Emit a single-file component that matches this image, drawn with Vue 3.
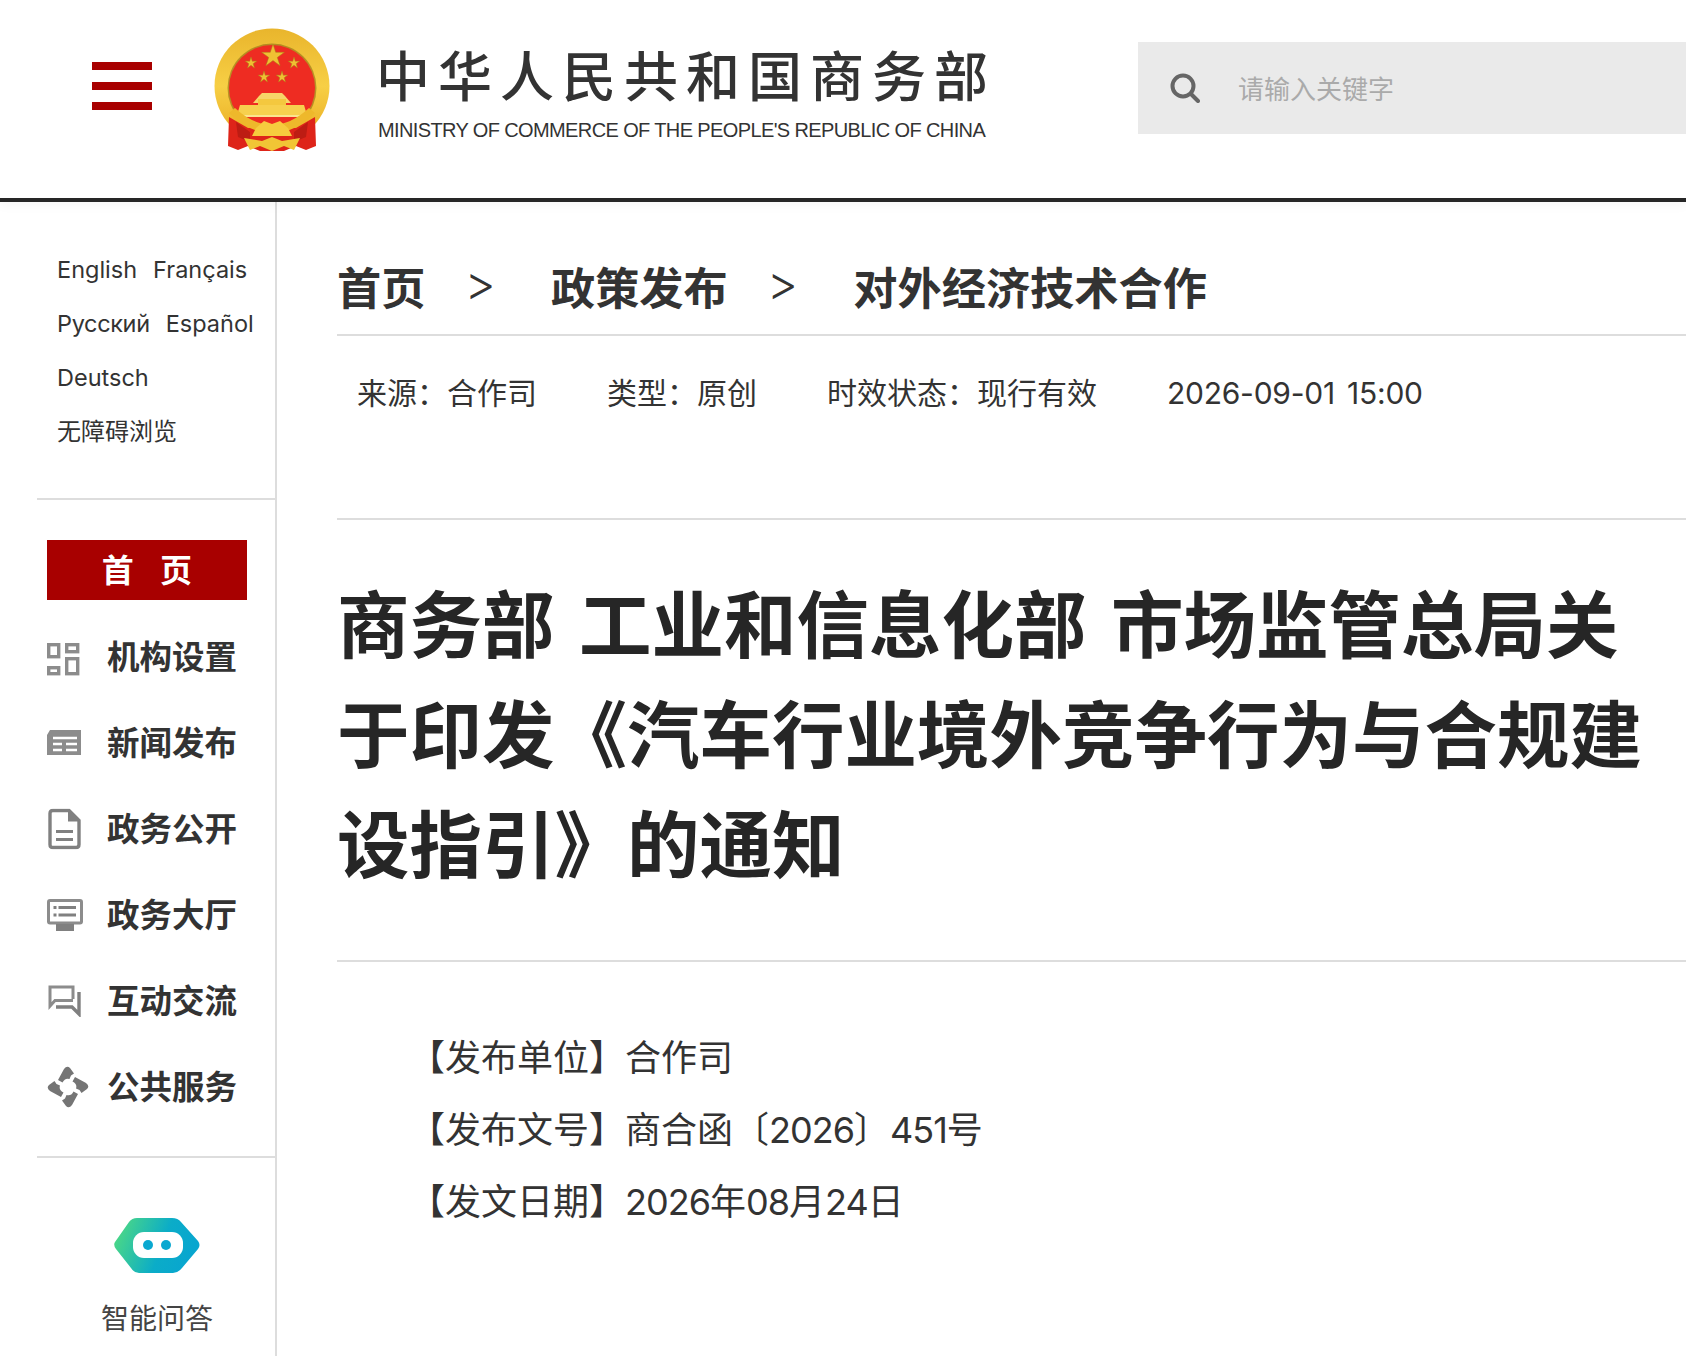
<template>
  <div class="page">
    <header class="top">
      <button class="burger" aria-label="menu"><i></i><i></i><i></i></button>
      <svg class="emblem" viewBox="214 28 116 124">
        <defs>
          <linearGradient id="gold" x1="0" y1="0" x2="0" y2="1">
            <stop offset="0" stop-color="#e9b52c" />
            <stop offset="0.5" stop-color="#f7cf45" />
            <stop offset="1" stop-color="#e8a91f" />
          </linearGradient>
        </defs>
        <circle cx="272" cy="86" r="57.5" fill="url(#gold)" />
        <circle cx="272" cy="88" r="44.5" fill="#8f6a14" opacity=".6" />
        <circle cx="272" cy="88" r="43" fill="#ee2c22" />
        <polygon v-for="s in stars" :key="s.x" :points="starPoints(s)" fill="#f0c033" stroke="#a87f18" stroke-width=".5" />
        <path d="M253 103 L259 96 L262 93 H282 L285 96 L291 103 Z" fill="#f7d568" />
        <rect x="258" y="99" width="28" height="6" fill="#f4c83f" />
        <path d="M240 105 H304 L307 115 H237 Z" fill="#f7d04e" />
        <rect x="236" y="115" width="72" height="2" fill="#fbe48e" />
        <path d="M229 117 L248 128 L296 128 L315 117 L316 146 L306 150 L296 146 L284 151 L260 151 L248 146 L238 150 L228 146 Z" fill="#de2419" />
        <path d="M236 122 L250 132 L250 142 L238 137 Z M308 122 L294 132 L294 142 L306 137 Z" fill="#bd1c13" />
        <path d="M229 113 Q272 154 315 113 L309 108 Q272 142 235 108 Z" fill="#eeb82b" />
        <path d="M256 128 L264 121 L272 124 L280 121 L288 128 L292 136 L252 136 Z" fill="#f6cc3e" />
        <path d="M244 138 L262 141 L272 137 L282 141 L300 138 L294 150 L284 146 L272 151 L260 146 L250 150 Z" fill="#f1c535" />
      </svg>
      <div class="logo-text">
        <div class="logo-cn">中华人民共和国商务部</div>
        <div class="logo-en">MINISTRY OF COMMERCE OF THE PEOPLE'S REPUBLIC OF CHINA</div>
      </div>
      <div class="search">
        <svg class="search-icon" viewBox="0 0 30 30">
          <circle cx="13" cy="13" r="10.5" fill="none" stroke="#666" stroke-width="4" />
          <path d="M21 21 L28 28" stroke="#666" stroke-width="4" stroke-linecap="round" />
        </svg>
        <input class="search-input" placeholder="请输入关键字" />
      </div>
    </header>

    <div class="body">
      <aside class="side">
        <div class="langs">
          <div class="lang-row"><span>English</span><span>Français</span></div>
          <div class="lang-row"><span class="ru">Русский</span><span>Español</span></div>
          <div class="lang-row"><span>Deutsch</span></div>
          <div class="lang-row access"><span>无障碍浏览</span></div>
        </div>
        <div class="side-rule"></div>
        <div class="home-btn">首 页</div>
        <nav class="nav">
          <div class="nav-row">
            <svg class="nav-icon grid" width="33" height="34" viewBox="0 0 33 34">
              <g fill="none" stroke="#8c8c8c" stroke-width="3.4">
                <rect x="1.7" y="2.7" width="10" height="12" />
                <rect x="19.7" y="2.7" width="11" height="7" />
                <rect x="1.7" y="25.7" width="10" height="6" />
                <rect x="19.7" y="16.7" width="11" height="15" />
              </g>
            </svg>
            <span>机构设置</span>
          </div>
          <div class="nav-row">
            <svg class="nav-icon" width="34" height="26" viewBox="0 0 34 26">
              <path d="M3 0 H34 V25 H0 V5 Z" fill="#8c8c8c" />
              <path d="M6 8 H30 M6 14 H15 M19 14 H30 M6 20 H15 M19 20 H30" stroke="#fff" stroke-width="2.4" />
            </svg>
            <span>新闻发布</span>
          </div>
          <div class="nav-row">
            <svg class="nav-icon doc" width="33" height="41" viewBox="0 0 33 41">
              <path d="M5 2 H21 L31 12 V36 Q31 39 28 39 H5 Q2 39 2 36 V5 Q2 2 5 2 Z" fill="none" stroke="#808080" stroke-width="3.4" />
              <path d="M20 2 L31 13 H20 Z" fill="#808080" />
              <path d="M8 23 H25 M8 31 H25" stroke="#808080" stroke-width="3" />
            </svg>
            <span>政务公开</span>
          </div>
          <div class="nav-row">
            <svg class="nav-icon" width="36" height="32" viewBox="0 0 36 32">
              <rect x="1.5" y="1.5" width="33" height="22.5" rx="1.5" fill="none" stroke="#8c8c8c" stroke-width="3" />
              <path d="M6.5 8.5 H9.5 M11.5 8.5 H29 M6.5 16 H9.5 M11.5 16 H29" stroke="#808080" stroke-width="3" />
              <rect x="9" y="25" width="18" height="7" fill="#808080" />
            </svg>
            <span>政务大厅</span>
          </div>
          <div class="nav-row">
            <svg class="nav-icon" width="36" height="32" viewBox="0 0 36 32">
              <path d="M26 14 V2 H3 V21 L8 15.5 H26" fill="none" stroke="#8c8c8c" stroke-width="3" />
              <path d="M32 7 V29 L25 22 H9" fill="none" stroke="#808080" stroke-width="3.4" />
            </svg>
            <span>互动交流</span>
          </div>
          <div class="nav-row">
            <svg class="nav-icon" width="42" height="44" viewBox="0 0 42 44">
              <path v-for="a in [0, 90, 180, 270]" :key="a" :transform="`rotate(${a} 21 22)`" d="M11 15 L17 4 Q20 0 23 3 L27 8.500 L24 10.500 L22.500 14 Q18 12.500 15.500 17.500 Z" fill="#757575" />
            </svg>
            <span>公共服务</span>
          </div>
        </nav>
        <div class="side-rule rule-low"></div>
        <div class="robot">
          <svg width="86" height="55" viewBox="0 0 86 55">
            <defs>
              <linearGradient id="robotFill" x1="0" y1="0" x2="1" y2="0.25">
                <stop offset="0" stop-color="#55de7c" />
                <stop offset="0.65" stop-color="#0bacc8" />
                <stop offset="1" stop-color="#08a6cf" />
              </linearGradient>
            </defs>
            <path d="M1 24 L15 4 Q18 0 23 0 H58 Q64 0 67 4 L84 23 Q87 27 84 31 L68 50 Q64 55 59 55 H25 Q20 55 17 50 L2 31 Q-1 27 1 24 Z" fill="url(#robotFill)" />
            <rect x="19" y="14" width="50" height="26" rx="11" fill="#fff" />
            <circle cx="34" cy="27" r="5" fill="#0aa8d0" />
            <circle cx="52" cy="27" r="5" fill="#0aa8d0" />
          </svg>
          <div class="robot-label">智能问答</div>
        </div>
      </aside>

      <main class="main">
        <div class="crumbs">
          <span>首页</span>
          <em>&gt;</em>
          <span>政策发布</span>
          <em>&gt;</em>
          <span>对外经济技术合作</span>
        </div>
        <div class="meta">
          <span>来源：合作司</span>
          <span>类型：原创</span>
          <span>时效状态：现行有效</span>
          <span class="date">2026-09-01 15:00</span>
        </div>
        <h1 class="title">商务部 工业和信息化部 市场监管总局关于印发《汽车行业境外竞争行为与合规建设指引》的通知</h1>
        <div class="info">
          <p>【发布单位】合作司</p>
          <p>【发布文号】商合函〔<span class="num">2026</span>〕<span class="num">451</span>号</p>
          <p>【发文日期】<span class="num">2026</span>年<span class="num">08</span>月<span class="num">24</span>日</p>
        </div>
      </main>
    </div>
  </div>
</template>

<script setup>
const stars = [
  { x: 273, y: 56, r: 12 },
  { x: 251, y: 63, r: 6 },
  { x: 294, y: 63, r: 6 },
  { x: 264, y: 77, r: 6 },
  { x: 282, y: 77, r: 6 }
]

function starPoints(s) {
  const pts = []
  for (let i = 0; i < 10; i++) {
    const rad = i % 2 === 0 ? s.r : s.r * 0.38
    const a = -Math.PI / 2 + (i * Math.PI) / 5
    pts.push((s.x + rad * Math.cos(a)).toFixed(1) + ',' + (s.y + rad * Math.sin(a)).toFixed(1))
  }
  return pts.join(' ')
}
</script>

<style>
html, body { background: #fff; }
</style>

<style scoped>
.page {
  width: 1686px;
  height: 1356px;
  overflow: hidden;
  background: #fff;
  font-family: Inter, "Noto Sans CJK SC", sans-serif;
  color: #333;
}
.top {
  position: relative;
  height: 198px;
  display: flex;
  align-items: flex-start;
  border-bottom: 4px solid #262626;
  box-shadow: 0 4px 10px rgba(0, 0, 0, 0.04);
}
.burger {
  width: 60px;
  height: 48px;
  margin: 62px 62px 0 92px;
  padding: 0;
  border: 0;
  background: none;
  display: flex;
  flex-direction: column;
  justify-content: space-between;
}
.burger i { display: block; height: 8px; background: #a80000; }
.emblem { width: 116px; height: 124px; margin-top: 28px; flex-shrink: 0; filter: blur(0.5px); }
.logo-text { margin: 44px 0 0 46px; width: 762px; }
.logo-cn {
  font-family: "Noto Sans CJK SC", sans-serif;
  font-size: 54px;
  font-weight: 500;
  line-height: 60px;
  letter-spacing: 8px;
  color: #333;
  white-space: nowrap;
}
.logo-en {
  margin: 14px 0 0 2px;
  font-family: "Liberation Sans", sans-serif;
  font-size: 20px;
  line-height: 24px;
  letter-spacing: -0.62px;
  color: #333;
  white-space: nowrap;
}
.search {
  flex: 1;
  height: 92px;
  margin-top: 42px;
  display: flex;
  align-items: center;
  background: #eaeaea;
}
.search-icon { width: 30px; height: 30px; margin: 0 38px 0 32px; filter: blur(0.4px); }
.search-input {
  width: 380px;
  border: 0;
  padding: 0 0 2px;
  outline: 0;
  background: none;
  font: 26px "Noto Sans CJK SC", sans-serif;
}
.search-input::placeholder { color: #aaa; opacity: 1; }

.body { display: flex; height: 1154px; }
.side {
  width: 275px;
  flex-shrink: 0;
  border-right: 2px solid #ddd;
}
.langs { padding: 41px 0 39px 57px; font-size: 23.5px; line-height: 54px; color: #333; }
.lang-row { display: flex; gap: 16px; white-space: nowrap; }
.ru { letter-spacing: -0.35px; }
.access { font-size: 24px; }
.side-rule { height: 2px; margin-left: 37px; background: #ddd; }
.home-btn {
  width: 200px;
  height: 60px;
  margin: 40px 0 14px 47px;
  background: #a80000;
  color: #fff;
  text-align: center;
  font-family: "Noto Sans CJK SC", sans-serif;
  font-size: 32px;
  font-weight: 700;
  line-height: 56px;
  white-space: pre;
  word-spacing: 19px;
}
.nav-row {
  position: relative;
  height: 86px;
  display: flex;
  align-items: center;
  padding: 0 0 6px 107px;
  box-sizing: border-box;
  font-family: "Noto Sans CJK SC", sans-serif;
  font-size: 32.5px;
  font-weight: 700;
  color: #333;
}
.nav-icon { position: absolute; left: 47px; top: 50%; transform: translateY(-50%); filter: blur(0.4px); }
.grid { margin-top: 2px; }
.doc { left: 48px; }
.rule-low { margin-top: 26px; }
.robot { margin-top: 60px; text-align: center; }
.robot svg { display: block; margin-left: 114px; }
.robot-label {
  width: 314px;
  margin-top: 24px;
  font-family: "Noto Sans CJK SC", sans-serif;
  font-size: 28px;
  line-height: 40px;
  color: #444;
}

.main { flex: 1; min-width: 0; padding-left: 60px; }
.crumbs {
  height: 134px;
  box-sizing: border-box;
  padding: 54px 0 0 0;
  display: flex;
  align-items: flex-start;
  border-bottom: 2px solid #ddd;
  font-family: "Noto Sans CJK SC", sans-serif;
  font-size: 44.2px;
  line-height: 60px;
  font-weight: 700;
  color: #333;
}
.crumbs em {
  width: 125.6px;
  box-sizing: border-box;
  padding-left: 39px;
  font-family: Inter, sans-serif;
  font-style: normal;
  font-weight: 300;
  font-size: 48px;
  line-height: 54px;
}
.meta {
  height: 184px;
  box-sizing: border-box;
  padding: 34px 0 0 20px;
  display: flex;
  gap: 70px;
  border-bottom: 2px solid #ddd;
  font-size: 30px;
  line-height: 46px;
  color: #333;
  white-space: nowrap;
}
.date { letter-spacing: -0.25px; word-spacing: 4px; }
.title {
  height: 442px;
  box-sizing: border-box;
  margin: 0;
  padding: 46px 10px 0 0;
  border-bottom: 2px solid #ddd;
  font-family: "Noto Sans CJK SC", sans-serif;
  font-size: 72.5px;
  line-height: 110px;
  font-weight: 700;
  word-spacing: 8px;
  color: #262626;
}
.info { padding: 60px 0 0 72px; font-size: 36px; line-height: 72px; color: #333; }
.info p { margin: 0; }
.num { letter-spacing: -1px; }
</style>
